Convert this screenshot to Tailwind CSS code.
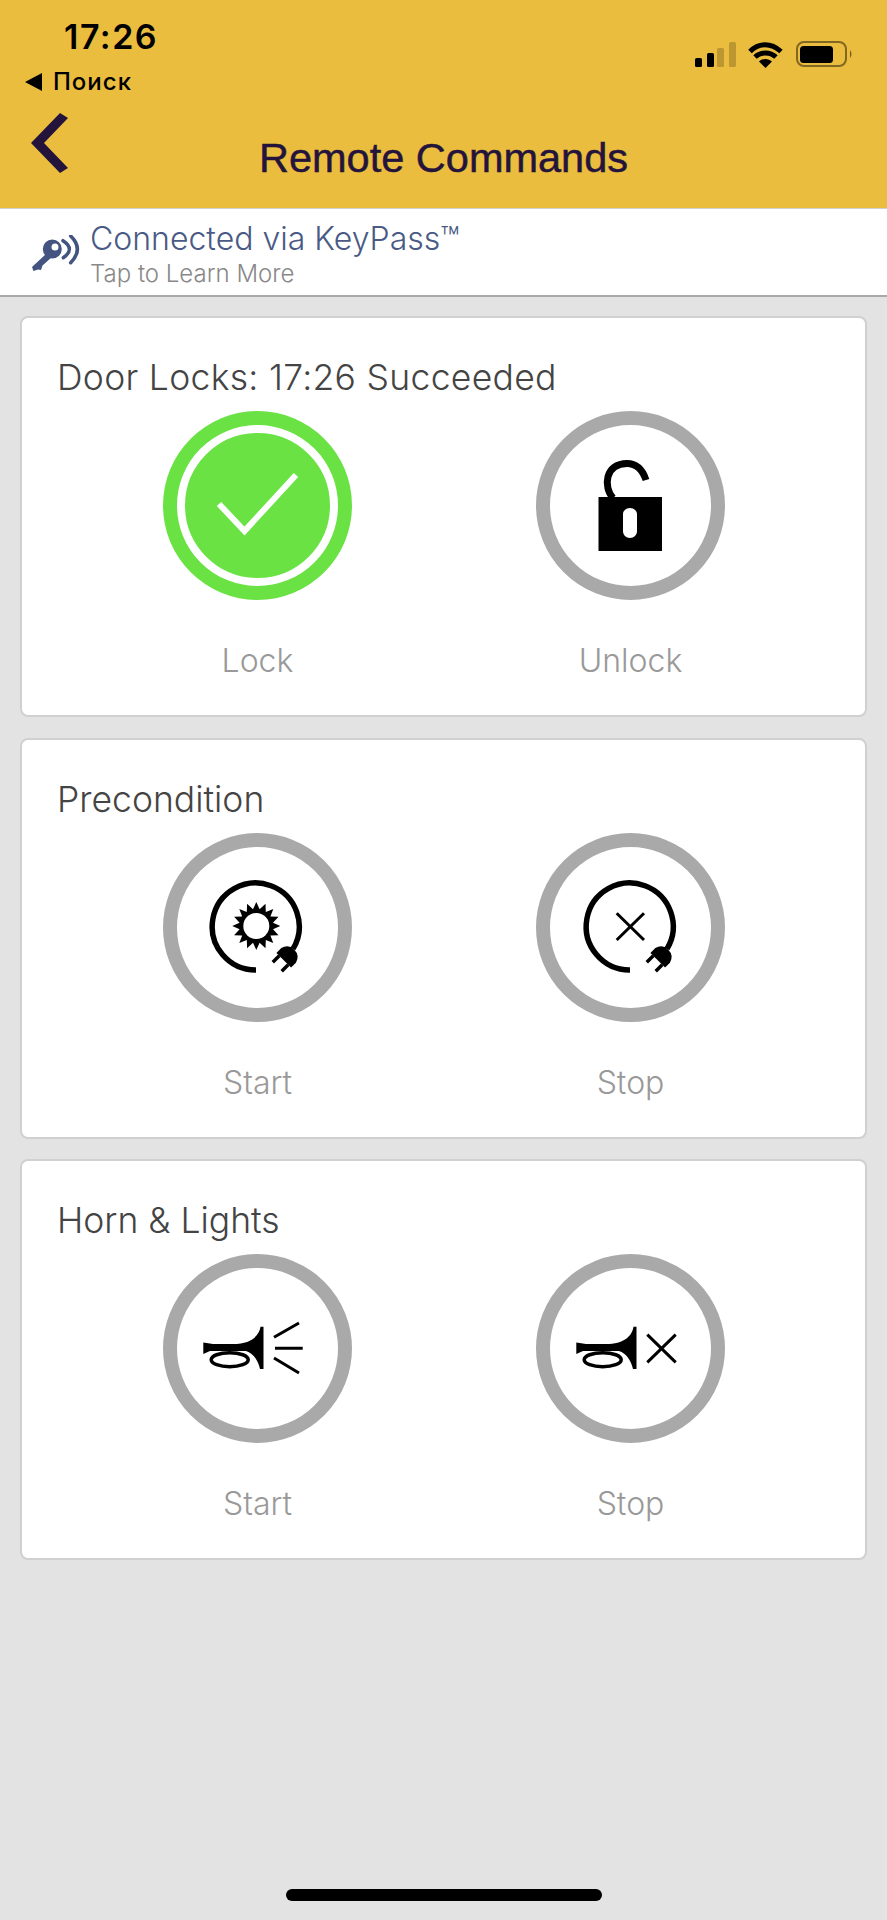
<!DOCTYPE html>
<html lang="en">
<head>
    <meta charset="UTF-8">
    <title>Remote Commands</title>
    <script src="https://cdn.jsdelivr.net/npm/@tailwindcss/browser@4"></script>
</head>
<body class="bg-[#e3e3e3] font-['Inter',sans-serif]">
<div class="relative h-[1920px] w-[887px] overflow-hidden flex flex-col">

    <header class="h-[208px] bg-[#ebbd3e] shrink-0 flex flex-col">
        <div class="flex justify-between pt-[20px] pl-[64px] pr-[32px]">
            <span class="text-[34px] leading-[34px] font-semibold tracking-[1.5px] text-black">17:26</span>
            <svg class="mt-[20px]" width="160" height="30" viewBox="0 0 160 30">
                <rect x="0" y="18" width="7" height="9" rx="1.5" fill="#000"/>
                <rect x="12" y="13" width="7" height="14" rx="1.5" fill="#000"/>
                <rect x="22" y="8" width="7" height="19" rx="1.5" fill="#000" fill-opacity=".2"/>
                <rect x="34" y="2" width="7" height="25" rx="1.5" fill="#000" fill-opacity=".2"/>
                <path d="M55 11.500C64 2.500 76 2.500 86 11.500M60 17C66 11.500 75 11.500 81 17" fill="none" stroke="#000" stroke-width="5"/>
                <path d="M64 21.500C68 18 73 18 77 21.500L70.500 28Z" fill="#000"/>
                <rect x="102" y="2" width="49" height="24" rx="7" fill="none" stroke="#000" stroke-opacity=".45" stroke-width="2"/>
                <rect x="105" y="6" width="33" height="17" rx="3.500" fill="#000"/>
                <path d="M155 10Q158 14 155 18Z" fill="#000" fill-opacity=".5"/>
            </svg>
        </div>
        <div class="flex items-center gap-[11px] pl-[25px] -mt-[3px]">
            <svg width="17" height="18" viewBox="0 0 17 18"><path d="M17 0V18L0 9Z" fill="#000"/></svg>
            <span class="text-[24px] leading-[30px] font-medium tracking-[1px] text-black">Поиск</span>
        </div>
        <div class="grid grid-cols-[1fr_auto_1fr]">
            <svg class="mt-[16px] ml-[31px]" width="38" height="60" viewBox="0 0 38 60"><path d="M29 0L37 5L13 30L37 55L29 60L0 30Z" fill="#24143c"/></svg>
            <h1 class="text-[41.500px] leading-[48px] mt-[37px] text-[#24143c] font-['Liberation_Sans',sans-serif] [-webkit-text-stroke:0.5px_#24143c]">Remote Commands</h1>
        </div>
    </header>

    <div class="h-[89px] shrink-0 bg-white border-t border-[#d0d0d0] border-b-[2px] border-b-[#a9a9a9] flex items-center gap-[9px] pl-[31px]">
        <svg width="50" height="38" viewBox="0 0 50 38" class="mt-[4px]">
            <path fill-rule="evenodd" d="M21.300 4.500A9.500 9.500 0 1 1 21.300 23.500A9.500 9.500 0 1 1 21.300 4.500ZM24 8.500A3.500 3.500 0 1 0 24 15.500A3.500 3.500 0 1 0 24 8.500Z" fill="#42547f"/>
            <path d="M15 19L1 32L2.500 36L7 34.500L10 35L11.500 30.500L21 22Z" fill="#42547f"/>
            <path d="M32 5.700Q44.600 14 32.300 22.700M39.700 1Q53 14 39.700 27.700" fill="none" stroke="#42547f" stroke-width="3.500" stroke-linecap="round"/>
        </svg>
        <div class="flex flex-col pt-[11px]">
            <span class="text-[32px] leading-[32px] text-[#4a5a85] font-light">Connected via KeyPass™</span>
            <span class="text-[24px] leading-[38px] text-[#888] font-light">Tap to Learn More</span>
        </div>
    </div>

    <main class="flex flex-col gap-[20.500px] px-[20px] pt-[19px]">
        <section class="h-[401px] bg-white border-[2px] border-[#d0d0d0] rounded-[8px] px-[35px] pt-[40px]">
            <h2 class="text-[35.500px] leading-[40px] tracking-[0.3px] text-[#444] font-light">Door Locks: 17:26 Succeeded</h2>
            <div class="grid grid-cols-[373px_373px] ml-[14px] mt-[13px]">
                <div class="flex flex-col items-center">
                    <svg width="189" height="189" viewBox="0 0 189 189">
                        <circle cx="94.500" cy="94.500" r="94.500" fill="#6ae244"/>
                        <circle cx="94.500" cy="94.500" r="76.500" fill="none" stroke="#fff" stroke-width="8"/>
                        <path d="M56 93L81.500 120L133 64" fill="none" stroke="#fff" stroke-width="6"/>
                    </svg>
                    <span class="mt-[41px] text-[32px] leading-[40px] text-[#999] font-light">Lock</span>
                </div>
                <div class="flex flex-col items-center">
                    <svg width="189" height="189" viewBox="0 0 189 189">
                        <circle cx="94.500" cy="94.500" r="87.500" fill="none" stroke="#a9a9a9" stroke-width="14"/>
                        <path d="M77 87C67 76 69 52.500 91 52.500C101 52.500 107 60 110 69" fill="none" stroke="#000" stroke-width="7"/>
                        <path fill-rule="evenodd" d="M62.500 86H126V140H62.500ZM94 97C90 97 87 100 87 103V120C87 124 90 127 94 127C98 127 101 124 101 120V103C101 100 98 97 94 97Z" fill="#000"/>
                    </svg>
                    <span class="mt-[41px] text-[32px] leading-[40px] text-[#999] font-light">Unlock</span>
                </div>
            </div>
        </section>

        <section class="h-[401px] bg-white border-[2px] border-[#d0d0d0] rounded-[8px] px-[35px] pt-[40px]">
            <h2 class="text-[35.500px] leading-[40px] text-[#444] font-light">Precondition</h2>
            <div class="grid grid-cols-[373px_373px] ml-[14px] mt-[13px]">
                <div class="flex flex-col items-center">
                    <svg width="189" height="189" viewBox="0 0 189 189">
                        <circle cx="94.500" cy="94.500" r="87.500" fill="none" stroke="#a9a9a9" stroke-width="14"/>
                        <path d="M93 137A43.500 43.500 0 1 1 130 115.900" fill="none" stroke="#000" stroke-width="5.500"/>
                        <g transform="translate(124 124) rotate(-45) scale(1.15)">
                            <path d="M-4 -9H2Q9 -7 9 0Q9 7 2 9H-4Z" fill="#000"/>
                            <path d="M-12 -7H-4V-4H-12ZM-12 4H-4V7H-12Z" fill="#000"/>
                        </g>
                        <g transform="translate(93.300 93)">
                            <polygon points="24,0 16.700,3.300 22.200,9.200 14.100,9.500 17,17 9.500,14.100 9.200,22.200 3.300,16.700 0,24 -3.300,16.700 -9.200,22.200 -9.500,14.100 -17,17 -14.100,9.500 -22.200,9.200 -16.700,3.300 -24,0 -16.700,-3.300 -22.200,-9.200 -14.100,-9.500 -17,-17 -9.500,-14.100 -9.200,-22.200 -3.300,-16.700 0,-24 3.300,-16.700 9.200,-22.200 9.500,-14.100 17,-17 14.100,-9.500 22.200,-9.200 16.700,-3.300" fill="#000"/>
                            <circle r="13" fill="#fff"/>
                        </g>
                    </svg>
                    <span class="mt-[41px] text-[32px] leading-[40px] text-[#999] font-light">Start</span>
                </div>
                <div class="flex flex-col items-center">
                    <svg width="189" height="189" viewBox="0 0 189 189">
                        <circle cx="94.500" cy="94.500" r="87.500" fill="none" stroke="#a9a9a9" stroke-width="14"/>
                        <path d="M94 137A43.500 43.500 0 1 1 131 115.900" fill="none" stroke="#000" stroke-width="5.500"/>
                        <g transform="translate(125 124) rotate(-45) scale(1.15)">
                            <path d="M-4 -9H2Q9 -7 9 0Q9 7 2 9H-4Z" fill="#000"/>
                            <path d="M-12 -7H-4V-4H-12ZM-12 4H-4V7H-12Z" fill="#000"/>
                        </g>
                        <path d="M80.700 80.300L108 107M108 80.300L80.700 107" fill="none" stroke="#000" stroke-width="3"/>
                    </svg>
                    <span class="mt-[41px] text-[32px] leading-[40px] text-[#999] font-light">Stop</span>
                </div>
            </div>
        </section>

        <section class="h-[401px] bg-white border-[2px] border-[#d0d0d0] rounded-[8px] px-[35px] pt-[40px]">
            <h2 class="text-[35.500px] leading-[40px] text-[#444] font-light">Horn &amp; Lights</h2>
            <div class="grid grid-cols-[373px_373px] ml-[14px] mt-[13px]">
                <div class="flex flex-col items-center">
                    <svg width="189" height="189" viewBox="0 0 189 189">
                        <circle cx="94.500" cy="94.500" r="87.500" fill="none" stroke="#a9a9a9" stroke-width="14"/>
                        <path d="M40.300 88.500V100L47 97H83C90 99 95 106 97 115H100.500V72.700H97.500C96 82 88 90 70 90H50Z" fill="#000"/>
                        <ellipse cx="66.700" cy="105.700" rx="18.500" ry="7" fill="none" stroke="#000" stroke-width="3.500"/>
                        <path d="M111 83.300L136 69M112 94.300H139.700M111 104L136 119" fill="none" stroke="#000" stroke-width="3"/>
                    </svg>
                    <span class="mt-[41px] text-[32px] leading-[40px] text-[#999] font-light">Start</span>
                </div>
                <div class="flex flex-col items-center">
                    <svg width="189" height="189" viewBox="0 0 189 189">
                        <circle cx="94.500" cy="94.500" r="87.500" fill="none" stroke="#a9a9a9" stroke-width="14"/>
                        <path d="M40.300 88.500V100L47 97H83C90 99 95 106 97 115H100.500V72.700H97.500C96 82 88 90 70 90H50Z" fill="#000"/>
                        <ellipse cx="66.700" cy="105.700" rx="18.500" ry="7" fill="none" stroke="#000" stroke-width="3.500"/>
                        <path d="M111.300 80.700L139.700 108.300M139.700 80.700L111.300 108.300" fill="none" stroke="#000" stroke-width="3"/>
                    </svg>
                    <span class="mt-[41px] text-[32px] leading-[40px] text-[#999] font-light">Stop</span>
                </div>
            </div>
        </section>
    </main>

    <div class="absolute left-[286px] top-[1889px] w-[316px] h-[12px] rounded-[6px] bg-black"></div>
</div>
</body>
</html>
